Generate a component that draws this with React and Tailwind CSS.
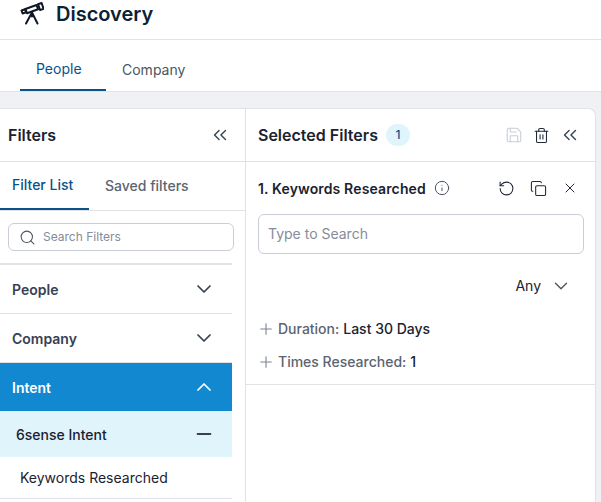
import {
  ChevronDown,
  ChevronUp,
  ChevronsLeft,
  Copy,
  Info,
  Minus,
  Plus,
  RotateCcw,
  Save,
  Search,
  Trash2,
  X,
} from 'lucide-react';

const TelescopeIcon = () => (
  <svg
    viewBox="0 0 24 24"
    className="h-6 w-6 text-[#101828]"
    fill="none"
    stroke="currentColor"
    strokeWidth="2"
    strokeLinejoin="round"
    strokeLinecap="round"
  >
    {/* eyepiece, tube, lens end and tripod */}
    <path d="M1.5 8.5 5 7.2l1.1 3-3.5 1.3z" />
    <path d="M5.4 7 16.5 3l1.6 4.3L7 11.2z" />
    <path d="M18 2.2 21.6 1l2 5.8-3.6 1.2z" />
    <path d="M12 10.5 6 21.5M12 10.5l5.5 11M12 10.5v4" />
  </svg>
);

const AccordionRow = ({ label }) => (
  <div className="flex h-[49px] items-center justify-between border-b border-[#e0e2e6] pl-3 pr-4">
    <span className="pt-[2px] text-sm font-semibold text-[#374151]">{label}</span>
    <ChevronDown className="h-6 w-6 text-[#374151]" strokeWidth={1.75} />
  </div>
);

const Refinement = ({ label, value }) => (
  <div className="flex items-center text-sm font-medium">
    <Plus className="-ml-px mr-[3px] h-[18px] w-[18px] text-[#7b8494]" strokeWidth={1.5} />
    <span className="text-[#5b6472]">{label}:</span>
    <span className="ml-[4px] text-[#1a2230]">{value}</span>
  </div>
);

const App = () => {
  return (
    <div className="h-[502px] w-[601px] overflow-hidden bg-[#f0f1f4] font-['Inter',sans-serif]">
      {/* Page title */}
      <div className="flex h-10 items-center gap-[12px] border-b border-[#e0e2e6] bg-white pb-[12px] pl-[20px]">
        <TelescopeIcon />
        <h1 className="text-xl font-semibold text-[#0b2235]">Discovery</h1>
      </div>

      {/* Top tabs */}
      <div className="flex h-[52px] border-b border-[#e0e2e6] bg-white pl-5">
        <div className="w-[86px] border-b-2 border-[#0a5288] pl-4 pt-[19px] text-sm text-[#0a5288]">People</div>
        <div className="pl-4 pt-5 text-sm text-[#4b5563]">Company</div>
      </div>

      <div className="mt-4 flex h-[394px] w-[596px] rounded-tr-lg border-t border-r border-[#e0e2e6] bg-white">
        {/* Filters column */}
        <div className="w-[246px] shrink-0 border-r border-[#e0e2e6]">
          <div className="flex h-[53px] items-center justify-between border-b border-[#e0e2e6] pl-2 pr-[14px]">
            <span className="text-base font-semibold text-[#1a2230]">Filters</span>
            <ChevronsLeft className="h-[22px] w-[22px] text-[#374151]" strokeWidth={1.5} />
          </div>
          <div className="flex h-[49px] border-b border-[#e0e2e6] text-sm">
            <div className="flex w-[89px] items-center border-b-2 border-[#0a5288] pl-3 font-medium text-[#0a5288]">
              Filter List
            </div>
            <div className="flex items-center pl-4 font-medium text-[#5b6472]">Saved filters</div>
          </div>
          <div className="px-2 pt-3">
            <div className="flex h-7 w-[226px] items-center gap-[7px] rounded-md border border-[#c9ced6] pl-[10px]">
              <Search className="h-[17px] w-[17px] text-[#4b5563]" strokeWidth={1.5} />
              <span className="text-xs text-[#858c99]">Search Filters</span>
            </div>
          </div>
          <div className="mt-[12px] w-[232px] border-t-2 border-[#e0e2e6]">
            <AccordionRow label="People" />
            <AccordionRow label="Company" />
            <div className="flex h-[48px] items-center justify-between bg-[#1188cf] pl-3 pr-4">
              <span className="pt-[2px] text-sm font-semibold text-white">Intent</span>
              <ChevronUp className="h-6 w-6 text-white" strokeWidth={1.75} />
            </div>
            <div className="flex h-[46px] items-center justify-between bg-[#e0f4fb] pl-4 pr-[17px]">
              <span className="pt-[2px] text-sm font-medium text-[#1a2230]">6sense Intent</span>
              <Minus className="h-[22px] w-[22px] text-[#374151]" strokeWidth={2} />
            </div>
            <div className="flex h-[42px] items-center border-b border-[#e0e2e6] pl-5 text-sm text-[#1a2230]">
              Keywords Researched
            </div>
          </div>
        </div>

        {/* Selected filters column */}
        <div className="flex-1">
          <div className="flex h-[53px] items-center border-b border-[#e0e2e6] pl-3 pr-[14px]">
            <span className="text-base font-semibold text-[#1a2230]">Selected Filters</span>
            <span className="ml-2 flex h-[22px] w-6 items-center justify-center rounded-full bg-[#e0f4fb] text-xs font-medium text-[#0a5288]">
              1
            </span>
            <div className="ml-auto flex items-center gap-[9px]">
              <Save className="mr-px h-[18px] w-[18px] text-[#c9ced6]" strokeWidth={1.5} />
              <Trash2 className="h-[17px] w-[17px] text-[#1f2937]" strokeWidth={1.5} />
              <ChevronsLeft className="h-[22px] w-[22px] text-[#374151]" strokeWidth={1.5} />
            </div>
          </div>
          <div className="border-b border-[#e0e2e6] pb-[12px] pl-3 pr-[11px]">
            <div className="flex h-[52px] items-center">
              <span className="pt-[2px] text-sm font-semibold tracking-[0.01em] text-[#1a2230]">1. Keywords Researched</span>
              <Info className="ml-[8px] h-4 w-4 text-[#4b5563]" strokeWidth={1.5} />
              <div className="ml-auto mr-[6px] flex items-center gap-[15px]">
                <RotateCcw className="h-[17px] w-[17px] text-[#1f2937]" strokeWidth={1.5} />
                <Copy className="h-[17px] w-[17px] text-[#1f2937]" strokeWidth={1.5} />
                <X className="h-4 w-4 text-[#1f2937]" strokeWidth={1.5} />
              </div>
            </div>
            <div className="flex h-10 items-center rounded-md border border-[#c9ced6] px-[9px] text-sm text-[#858c99]">
              Type to Search
            </div>
            <div className="mt-[21px] flex h-[22px] items-center justify-end gap-[9px] pr-[12px] text-sm text-[#1a2230]">
              Any
              <ChevronDown className="h-[22px] w-[22px] text-[#4b5563]" strokeWidth={1.5} />
            </div>
            <div className="mt-[22px] flex flex-col gap-[13px]">
              <Refinement label="Duration" value="Last 30 Days" />
              <Refinement label="Times Researched" value="1" />
            </div>
          </div>
        </div>
      </div>
    </div>
  );
};

export default App;
